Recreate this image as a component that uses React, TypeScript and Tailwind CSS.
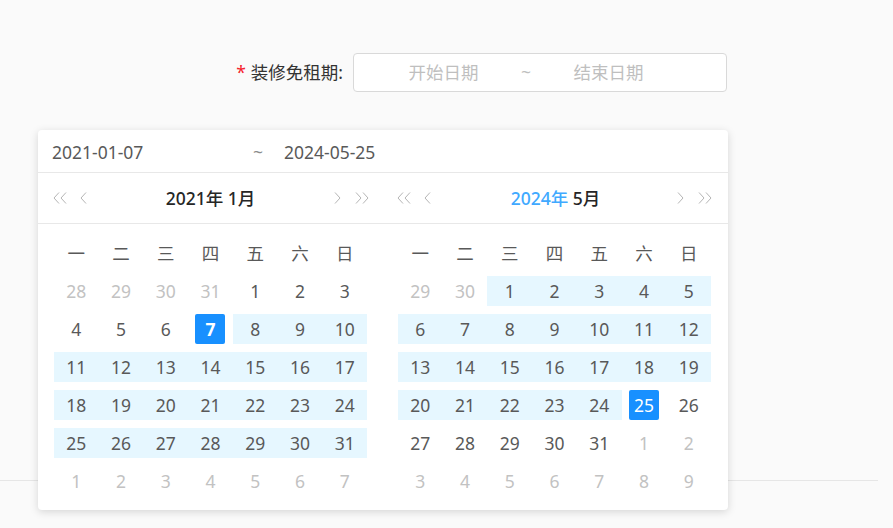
import React from 'react'

type Kind = 'off' | 'on' | 'range' | 'start' | 'end'

interface Day {
  d: number
  k: Kind
}

const font = { fontFamily: '"Noto Sans", "Noto Sans CJK SC", sans-serif' }

const weekdays = ['一', '二', '三', '四', '五', '六', '日']

function row(nums: number[], kinds: Kind[]): Day[] {
  return nums.map((d, i) => ({ d, k: kinds[i] }))
}

const all = (k: Kind): Kind[] => [k, k, k, k, k, k, k]

const leftMonth: Day[][] = [
  row([28, 29, 30, 31, 1, 2, 3], ['off', 'off', 'off', 'off', 'on', 'on', 'on']),
  row([4, 5, 6, 7, 8, 9, 10], ['on', 'on', 'on', 'start', 'range', 'range', 'range']),
  row([11, 12, 13, 14, 15, 16, 17], all('range')),
  row([18, 19, 20, 21, 22, 23, 24], all('range')),
  row([25, 26, 27, 28, 29, 30, 31], all('range')),
  row([1, 2, 3, 4, 5, 6, 7], all('off')),
]

const rightMonth: Day[][] = [
  row([29, 30, 1, 2, 3, 4, 5], ['off', 'off', 'range', 'range', 'range', 'range', 'range']),
  row([6, 7, 8, 9, 10, 11, 12], all('range')),
  row([13, 14, 15, 16, 17, 18, 19], all('range')),
  row([20, 21, 22, 23, 24, 25, 26], ['range', 'range', 'range', 'range', 'range', 'end', 'on']),
  row([27, 28, 29, 30, 31, 1, 2], ['on', 'on', 'on', 'on', 'on', 'off', 'off']),
  row([3, 4, 5, 6, 7, 8, 9], all('off')),
]

function Single({ flip }: { flip?: boolean }) {
  return (
    <svg width="7" height="12" viewBox="0 0 7 12" className={flip ? 'rotate-180' : ''}>
      <path d="M6 0.5 L1 6 L6 11.5" fill="none" stroke="#b5b5b5" strokeWidth="1" />
    </svg>
  )
}

function Double({ flip }: { flip?: boolean }) {
  return (
    <svg width="14" height="12" viewBox="0 0 14 12" className={flip ? 'rotate-180' : ''}>
      <path
        d="M6 0.5 L1 6 L6 11.5 M13 0.5 L8 6 L13 11.5"
        fill="none"
        stroke="#b5b5b5"
        strokeWidth="1"
      />
    </svg>
  )
}

function Cell({ day }: { day: Day }) {
  if (day.k === 'start' || day.k === 'end') {
    return (
      <div className="py-1">
        <div className="h-[30px] flex items-center justify-center">
          <span
            className={`w-[30px] h-[30px] rounded-[2px] bg-[#1890ff] text-white flex items-center justify-center ${
              day.k === 'start' ? 'font-bold' : ''
            }`}
          >
            {day.d}
          </span>
        </div>
      </div>
    )
  }
  return (
    <div className="py-1">
      <div
        className={`h-[30px] flex items-center justify-center ${
          day.k === 'range' ? 'bg-[#e6f7ff] text-[#595959]' : ''
        } ${day.k === 'off' ? 'text-[#c2c2c2]' : ''} ${day.k === 'on' ? 'text-[#595959]' : ''}`}
      >
        {day.d}
      </div>
    </div>
  )
}

function Panel({
  year,
  month,
  weeks,
  yearBlue,
  side,
}: {
  year: string
  month: string
  weeks: Day[][]
  yearBlue?: boolean
  side: 'left' | 'right'
}) {
  return (
    <div className="w-[345px]">
      <div className="h-[51px] border-b border-[#e8e8e8] flex items-center">
        <div className={`w-[90px] flex items-center ${side === 'left' ? 'pl-[15px]' : 'pl-[14px]'}`}>
          <Double />
          <span className="ml-[13px] flex">
            <Single />
          </span>
        </div>
        <div className="flex-1 text-center font-medium text-[#262626]">
          <span className={yearBlue ? 'text-[#40a9ff]' : ''}>{year}</span> {month}
        </div>
        <div
          className={`w-[90px] flex items-center justify-end ${
            side === 'left' ? 'pr-[14px]' : 'pr-[16px]'
          }`}
        >
          <span className="mr-[14px] flex">
            <Single flip />
          </span>
          <Double flip />
        </div>
      </div>
      <div className={`pt-[10px] pb-[10px] ${side === 'left' ? 'pl-4' : 'pl-[15px]'}`}>
        <div className="grid grid-cols-7 w-[313px]">
          {weekdays.map((w) => (
            <div key={w} className="h-[38px] flex items-center justify-center text-[#595959]">
              {w}
            </div>
          ))}
          {weeks.flat().map((d, i) => (
            <Cell key={i} day={d} />
          ))}
        </div>
      </div>
    </div>
  )
}

export default function App() {
  return (
    <div className="relative min-h-[528px] w-[893px] bg-[#fafafa] text-[17.5px]" style={font}>
      <div className="pt-[53px] flex items-center">
        <div className="w-[353px] pr-[10px] flex justify-end items-center text-[#333333]">
          <span className="text-[#f5222d] mr-[5px]">*</span>
          <span>装修免租期:</span>
        </div>
        <div className="w-[374px] h-[39px] bg-white border border-[#d9d9d9] rounded-[4px] flex items-center pl-[14px] text-[#bfbfbf]">
          <span className="w-[151px] text-center">开始日期</span>
          <span className="w-[14px] text-center">~</span>
          <span className="w-[151px] text-center">结束日期</span>
        </div>
      </div>

      <div className="mt-[388px] w-[878px] h-px bg-[#e6e6e6]" />

      <div className="absolute left-[38px] top-[130px] w-[690px] bg-white rounded-[4px] shadow-[0_2px_8px_rgba(0,0,0,0.15)]">
        <div className="h-[43px] border-b border-[#e8e8e8] flex items-center text-[#595959] pt-[2px]">
          <span className="ml-[14px] w-[201px]">2021-01-07</span>
          <span className="w-[10px] text-center text-[#8c8c8c]">~</span>
          <span className="ml-[21px]">2024-05-25</span>
        </div>
        <div className="flex">
          <Panel year="2021年" month="1月" weeks={leftMonth} side="left" />
          <Panel year="2024年" month="5月" weeks={rightMonth} yearBlue side="right" />
        </div>
      </div>
    </div>
  )
}
